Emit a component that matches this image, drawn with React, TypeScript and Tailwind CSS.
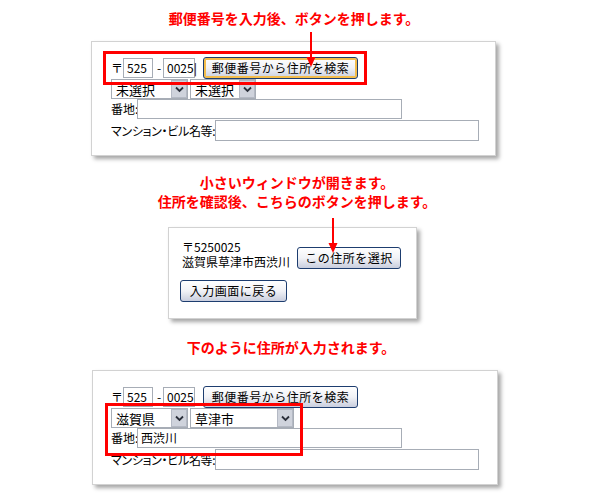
import React from 'react';

const jp = "font-['Noto_Sans_CJK_JP','Noto_Sans',sans-serif]";

function DownArrow({ className }: { className: string }) {
  return (
    <svg className={className} width="10" height="35" viewBox="0 0 10 35">
      <line x1="5" y1="0" x2="5" y2="27" stroke="#ff0000" strokeWidth="2" />
      <polygon points="0.5,25 9.5,25 5,35" fill="#ff0000" />
    </svg>
  );
}

function TextBox({ width, value, height = 'h-[20px]' }: { width: string; value?: string; height?: string }) {
  return (
    <div className={`${width} ${height} border border-[#a7adb6] bg-white pl-[3px] flex items-center text-[12px] leading-none text-black`}>
      {value}
    </div>
  );
}

function SelectBox({ width, value }: { width: string; value: string }) {
  return (
    <div className={`${width} h-[20px] border border-[#a7adb6] bg-white flex items-center`}>
      <span className="flex-1 pl-[4px] text-[13px] leading-none text-black">{value}</span>
      <span className="w-[16px] h-[18px] border border-[#b4b9c4] bg-[#cfd3dc] flex items-center justify-center">
        <svg width="9" height="7" viewBox="0 0 9 7">
          <path d="M1 1.5 L4.5 5 L8 1.5" stroke="#2a2f3a" strokeWidth="1.8" fill="none" />
        </svg>
      </span>
    </div>
  );
}

function XpButton({ width, label, focused }: { width: string; label: string; focused?: boolean }) {
  return (
    <div
      className={`${width} h-[22px] rounded-[3px] border border-[#1d3d6f] bg-gradient-to-b from-white via-[#f1f2f6] to-[#c9cede] flex items-center justify-center text-[12px] tracking-[0.5px] leading-none text-black ${
        focused ? 'shadow-[inset_0_0_0_2px_#f4bd4b]' : ''
      }`}
    >
      {label}
    </div>
  );
}

function AddressForm({ filled }: { filled?: boolean }) {
  return (
    <div className="flex flex-col">
      <div className="flex items-center h-[22px] text-[12px] text-black">
        <span className="w-[12px]">〒</span>
        <TextBox width="w-[30px]" value="525" />
        <span className="ml-[4px] mr-[2px] w-[4px]">-</span>
        <TextBox width="w-[32px]" value={filled ? '0025' : '0025|'} />
        <div className="ml-[8px]">
          <XpButton width="w-[155px]" label="郵便番号から住所を検索" focused={!filled} />
        </div>
      </div>
      <div className="flex gap-[2px]">
        <SelectBox width="w-[77px]" value={filled ? '滋賀県' : '未選択'} />
        <SelectBox width={filled ? 'w-[104px]' : 'w-[66px]'} value={filled ? '草津市' : '未選択'} />
      </div>
      <div className="flex items-center text-[12px] text-black">
        <span className="w-[26px] whitespace-nowrap">番地:</span>
        <TextBox width="w-[265px]" value={filled ? '西渋川' : ''} />
      </div>
      <div className="flex items-center mt-[1px] text-[12px] text-black">
        <span className="w-[104px] whitespace-nowrap tracking-[-0.3px] [font-feature-settings:'palt']">マンション・ビル名等:</span>
        <TextBox width="w-[264px]" height="h-[21px]" />
      </div>
    </div>
  );
}

export default function App() {
  return (
    <div className={`relative w-[600px] h-[500px] bg-white ${jp}`}>
      <p className="pt-[8px] pr-[12px] text-center text-[14px] leading-[20px] font-bold text-[#ff0000]">
        郵便番号を入力後、ボタンを押します。
      </p>

      <div className="relative ml-[91px] mt-[13px] w-[405px] h-[115px] border border-[#d2d2d2] bg-white shadow-[3px_3px_4px_rgba(0,0,0,0.35)] pl-[19px] pt-[15px]">
        <AddressForm />
        <div className="absolute left-[11px] top-[9px] w-[264px] h-[34px] border-[3px] border-[#ff0000]" />
      </div>

      <div className="mt-[17px] pr-[6px] text-center text-[14px] leading-[19px] font-bold text-[#ff0000]">
        <p>小さいウィンドウが開きます。</p>
        <p>住所を確認後、こちらのボタンを押します。</p>
      </div>

      <div className="ml-[168px] mt-[16px] w-[249px] h-[92px] border border-[#d2d2d2] bg-white shadow-[3px_3px_4px_rgba(0,0,0,0.35)] pl-[11px] pt-[11px] text-[12px] text-black">
        <div className="flex items-end">
          <div className="pl-[2px] leading-[15px]">
            <p>〒5250025</p>
            <p>滋賀県草津市西渋川</p>
          </div>
          <div className="ml-[7px]">
            <XpButton width="w-[104px]" label="この住所を選択" />
          </div>
        </div>
        <div className="mt-[11px]">
          <XpButton width="w-[107px]" label="入力画面に戻る" />
        </div>
      </div>

      <p className="mt-[18px] pr-[18px] text-center text-[14px] leading-[20px] font-bold text-[#ff0000]">
        下のように住所が入力されます。
      </p>

      <div className="relative ml-[92px] mt-[13px] w-[406px] h-[115px] border border-[#d2d2d2] bg-white shadow-[3px_3px_4px_rgba(0,0,0,0.35)] pl-[18px] pt-[15px]">
        <AddressForm filled />
        <div className="absolute left-[12px] top-[32px] w-[198px] h-[53px] border-[3px] border-[#ff0000]" />
      </div>

      <DownArrow className="absolute left-[306px] top-[32px]" />
      <DownArrow className="absolute left-[328px] top-[218px]" />
    </div>
  );
}
